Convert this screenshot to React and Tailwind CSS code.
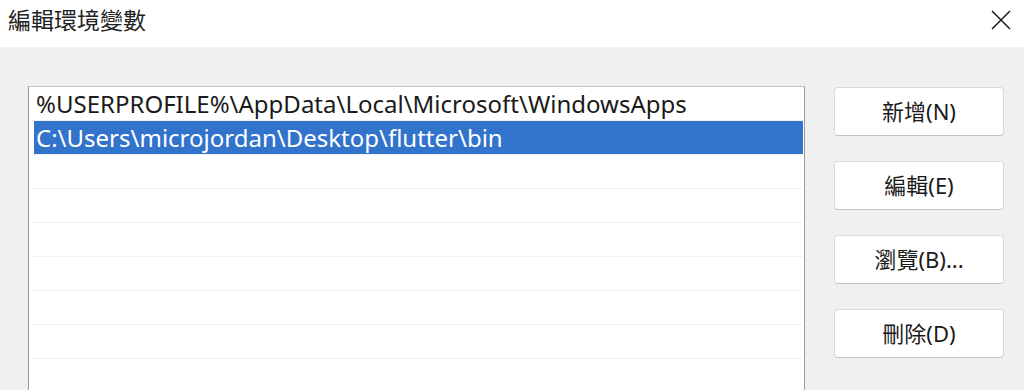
const font = { fontFamily: '"Noto Sans", "Noto Sans CJK TC", sans-serif' };

const rows = [
  '%USERPROFILE%\\AppData\\Local\\Microsoft\\WindowsApps',
  'C:\\Users\\microjordan\\Desktop\\flutter\\bin',
  '', '', '', '', '', '', '',
];

const buttons = ['新增(N)', '編輯(E)', '瀏覽(B)...', '刪除(D)'];

export default function App() {
  return (
    <div className="w-[1024px] h-[390px] overflow-hidden flex flex-col bg-[#f0f0f0] text-[#1a1a1a]" style={font}>
      {/* Title bar */}
      <div className="h-[47px] bg-white flex items-center justify-between pl-[8px] pr-[13px] shrink-0">
        <span className="text-[23px] leading-none text-[#222] -mt-[6px]">編輯環境變數</span>
        <svg width="20" height="20" viewBox="0 0 20 20" className="-mt-[8px]">
          <path d="M1 1 L19 19 M19 1 L1 19" stroke="#1a1a1a" strokeWidth="1.5" fill="none" />
        </svg>
      </div>

      {/* Body */}
      <div className="flex flex-1 pt-[39px] pl-[28px] gap-[29px]">
        <div className="w-[777px] h-[340px] bg-white border border-[#9a9a9a] border-t-[#c4c4c4] border-b-0 pl-[1px] pr-[1px]">
          {rows.map((text, i) => (
            <div
              key={i}
              className={`h-[34px] flex items-center border-b border-[#f0f0f0] ${i === 1 ? 'ml-[4px] bg-[#3273cb] text-white pl-[2px]' : 'pl-[6px]'}`}
            >
              <span className="text-[24px] leading-none whitespace-nowrap">{text}</span>
            </div>
          ))}
        </div>

        <div className="flex flex-col gap-[25px] pt-[1px]">
          {buttons.map((label) => (
            <button
              key={label}
              className="w-[170px] h-[49px] bg-white rounded-[4px] border border-[#dadada] border-b-[#c4c4c4] text-[22px] text-[#1a1a1a] flex items-center justify-center"
            >
              {label}
            </button>
          ))}
        </div>
      </div>
    </div>
  );
}
